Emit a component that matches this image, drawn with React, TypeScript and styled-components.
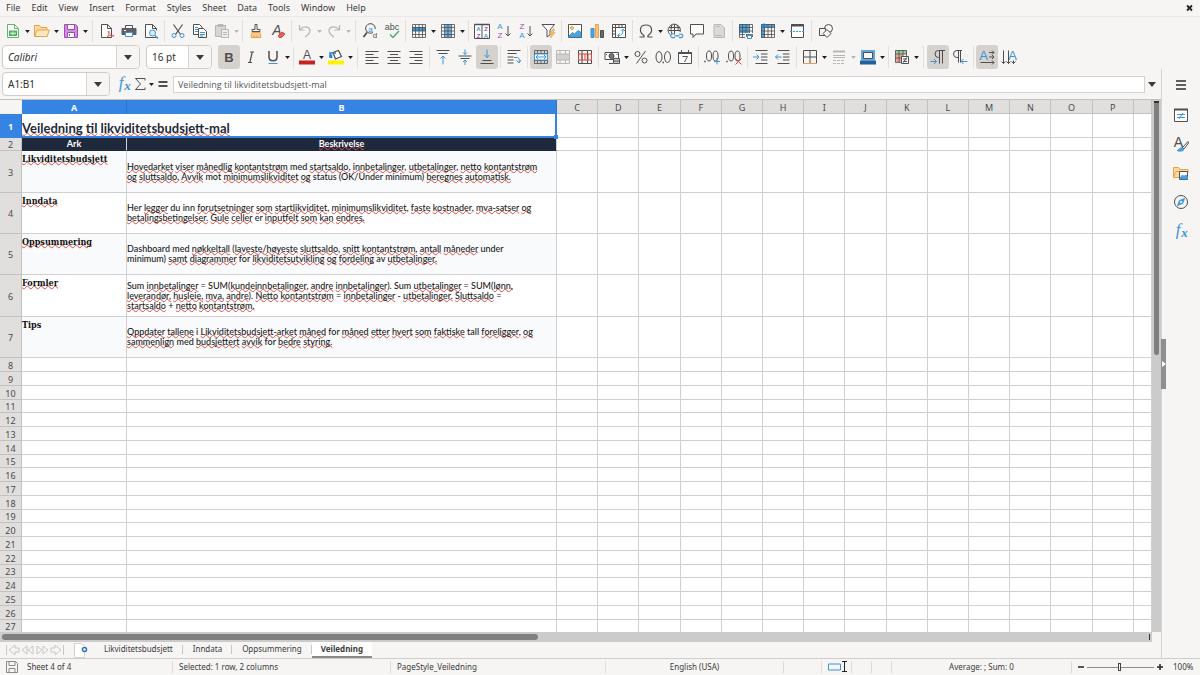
import React, { Fragment, ReactNode } from "react";
import styled, { createGlobalStyle, css } from "styled-components";

const INK = "#4f4f4f";
const BLUE = "#3d94d6";
const RED = "#d9453f";
const ORANGE = "#e8a24a";
const PURPLE = "#a04bb5";
const GREY = "#b9b7b5";

const GlobalStyle = createGlobalStyle`
  *, *::before, *::after { box-sizing: border-box; }
  body { margin: 0; background: #f6f5f4; font: 9px/12px "Noto Sans", sans-serif; color: #3b3b3b; }
  button, input { font: inherit; color: inherit; margin: 0; padding: 0; border: 0; background: none; }
`;

/* ---------- page frame ---------- */

const Page = styled.div`
  display: flex;
  flex-direction: column;
  height: 100vh;
  overflow: hidden;
`;

const MenuBar = styled.nav`
  display: flex;
  flex: none;
  align-items: center;
  gap: 11px;
  height: 17px;
  padding: 0 6px;
  border-bottom: 1px solid #eae8e6;
`;

const MenuItem = styled.button`
  height: 16px;
  line-height: 16px;
`;

const CloseButton = styled.button`
  display: flex;
  margin-left: auto;
`;

const Toolbar = styled.div<{ $height: number }>`
  display: flex;
  flex: none;
  align-items: center;
  height: ${(p) => p.$height}px;
  padding: 0 2px;
`;

const ToolButton = styled.button<{ $active?: boolean }>`
  display: flex;
  flex: none;
  align-items: center;
  justify-content: center;
  width: 22px;
  height: 24px;
  border-radius: 3px;
  ${(p) => p.$active && css`background: #d5d1cd;`}
`;

const ArrowButton = styled.button<{ $dim?: boolean }>`
  display: flex;
  flex: none;
  align-items: center;
  justify-content: center;
  width: 7px;
  height: 24px;
  color: ${(p) => (p.$dim ? GREY : "#1c1c1c")};
`;

const Separator = styled.span<{ $wide?: boolean }>`
  flex: none;
  width: 1px;
  height: 22px;
  margin: 0 ${(p) => (p.$wide ? 3 : 2)}px;
  background: #e2e0de;
`;

const Combo = styled.div<{ $width: number }>`
  display: flex;
  flex: none;
  width: ${(p) => p.$width}px;
  height: 24px;
  margin-right: 6px;
  border: 1px solid #cfccc9;
  border-radius: 4px;
  background: #fff;
  overflow: hidden;
`;

const ComboInput = styled.input<{ $italic?: boolean }>`
  flex: 1;
  min-width: 0;
  padding-left: 5px;
  font-size: 10px;
  font-style: ${(p) => (p.$italic ? "italic" : "normal")};
  color: #2e2e2e;
`;

const ComboArrow = styled.button`
  display: flex;
  align-items: center;
  justify-content: center;
  width: 23px;
  border-left: 1px solid #d9d6d3;
  background: #f6f5f4;
`;

const Main = styled.div`
  display: flex;
  flex: 1;
  min-height: 0;
`;

const Workspace = styled.main`
  display: flex;
  flex: 1;
  flex-direction: column;
  min-width: 0;
`;

const FormulaBar = styled.div`
  display: flex;
  flex: none;
  align-items: center;
  height: 31px;
  padding: 0 2px;
  border-bottom: 1px solid #c4c2c0;
`;

const FormulaButton = styled.button`
  display: flex;
  align-items: center;
  justify-content: center;
  width: 16px;
  height: 22px;
`;

const FormulaInput = styled.input`
  flex: 1;
  height: 17px;
  margin-left: 2px;
  padding-left: 4px;
  border: 1px solid #d5d2cf;
  background: #fff;
  color: #555;
  font-family: "Open Sans", "Noto Sans", sans-serif;
`;

const ExpandButton = styled.button`
  display: flex;
  align-items: center;
  justify-content: center;
  width: 14px;
  height: 22px;
`;

const Sidebar = styled.aside`
  position: relative;
  display: flex;
  flex: none;
  flex-direction: column;
  align-items: center;
  gap: 7px;
  width: 39px;
  padding-top: 5px;
  border-left: 1px solid #d5d2cf;
`;

const SidebarButton = styled.button`
  display: flex;
  align-items: center;
  justify-content: center;
  width: 24px;
  height: 22px;

  &:first-child { margin-bottom: 1px; }
`;

const SidebarHandle = styled.button`
  position: absolute;
  top: 270px;
  left: -1px;
  display: flex;
  align-items: center;
  justify-content: center;
  width: 5px;
  height: 50px;
  background: #8f8f8f;
`;

/* ---------- sheet ---------- */

const SheetArea = styled.div`
  display: flex;
  flex: 1;
  min-height: 0;
`;

const SheetView = styled.div`
  flex: 1;
  min-width: 0;
  overflow: hidden;
  background: #fff;
`;

const Sheet = styled.table`
  width: 100%;
  table-layout: fixed;
  border-collapse: separate;
  border-spacing: 0;
`;

const Column = styled.col<{ $width?: number }>`
  ${(p) => p.$width && css`width: ${p.$width}px;`}
`;

const Row = styled.tr<{ $height: number }>`
  height: ${(p) => p.$height}px;
`;

const HeadCell = styled.th<{ $selected?: boolean }>`
  padding: 1px 0 0;
  overflow: hidden;
  border-right: 1px solid ${(p) => (p.$selected ? "#2c72c7" : "#c4c2c0")};
  border-bottom: 1px solid ${(p) => (p.$selected ? "#3584e4" : "#c4c2c0")};
  background: ${(p) => (p.$selected ? "#3584e4" : "#e1dfde")};
  color: ${(p) => (p.$selected ? "#fff" : "#4a4a4a")};
  font-weight: ${(p) => (p.$selected ? 700 : 400)};
  line-height: 11px;
`;

const CornerCell = styled(HeadCell)`
  border-color: #f0efee;
  background: #f6f5f4;
`;

const Cell = styled.td`
  padding: 0;
  border-right: 1px solid #d0d0d0;
  border-bottom: 1px solid #d0d0d0;
`;

const TitleCell = styled(Cell)`
  position: relative;
  border-right: 2px solid #3584e4;
  border-bottom: 2px solid #3584e4;
  color: #1e293b;
  font: 700 13px/15px Lato, sans-serif;
  vertical-align: bottom;
`;

const FillHandle = styled.span`
  position: absolute;
  right: -3px;
  bottom: -3px;
  width: 4px;
  height: 4px;
  background: #3584e4;
`;

const BannerCell = styled(Cell)`
  border-bottom-color: #1e293b;
  background: #1e293b;
  color: #fff;
  font: 700 9px/11px Lato, sans-serif;
  text-align: center;
  vertical-align: top;
`;

const TopicCell = styled(Cell)<{ $tint: boolean }>`
  padding-top: 2px;
  background: ${(p) => (p.$tint ? "#f8fafc" : "#fff")};
  color: #111;
  font: 700 9px/12px "DejaVu Serif Condensed", "DejaVu Serif", serif;
  font-stretch: condensed;
  vertical-align: top;
`;

const TextCell = styled(Cell)<{ $tint: boolean }>`
  background: ${(p) => (p.$tint ? "#f8fafc" : "#fff")};
  color: #1a1a1a;
  font: 500 9px/10px Lato, sans-serif;
  white-space: nowrap;
`;

const Misspelt = styled.span`
  text-decoration: underline wavy #dc4a44 1px;
  text-decoration-skip-ink: none;
  text-underline-offset: -1px;
`;

const VerticalScroll = styled.div`
  flex: none;
  width: 9px;
  padding: 1px 2px;
  background: #cbcbcb;
`;

const VerticalThumb = styled.div`
  height: 254px;
  border-top: 2px solid #333;
  border-radius: 0 0 3px 3px;
  background: #7f7f7f;
`;

const HorizontalScroll = styled.div`
  display: flex;
  flex: none;
  justify-content: space-between;
  height: 10px;
  margin-right: 9px;
  padding: 2px;
  background: #cbcbcb;
`;

const HorizontalThumb = styled.div`
  width: calc(100% * 7 / 15);
  border-radius: 3px;
  background: #7f7f7f;
`;

const ScrollEnd = styled.span`
  width: 1px;
  background: #333;
`;

const TabBar = styled.div`
  display: flex;
  flex: none;
  align-items: stretch;
  height: 16px;
  padding-left: 5px;
  font-size: 8px;
`;

const TabNav = styled.button`
  display: flex;
  align-items: center;
  width: 15px;
`;

const AddTab = styled.button`
  display: flex;
  align-items: center;
  margin: 0 5px 0 9px;
`;

const Tab = styled.button<{ $active?: boolean }>`
  position: relative;
  padding: 0 10px 2px;
  ${(p) =>
    p.$active
      ? css`
          padding: 0 9px;
          border-bottom: 2px solid #8a8a8a;
          background: #fff;
          font-weight: 700;
        `
      : css`
          &::after {
            content: "";
            position: absolute;
            right: 0;
            top: 3px;
            height: 9px;
            border-right: 1px solid #c9c7c5;
          }
        `}
`;

const StatusBar = styled.footer`
  display: flex;
  flex: none;
  align-items: center;
  height: 17px;
  border-top: 1px solid #d0cecc;
  font-size: 8px;
`;

const StatusItem = styled.div<{ $width: number; $center?: boolean; $plain?: boolean }>`
  position: relative;
  display: flex;
  flex: ${(p) => p.$width} 1 ${(p) => p.$width}px;
  align-items: center;
  justify-content: ${(p) => (p.$center ? "center" : "flex-start")};
  height: 12px;
  padding-left: ${(p) => (p.$center ? 0 : 6)}px;
  border-right: 1px solid ${(p) => (p.$plain ? "transparent" : "#dedcda")};
  white-space: nowrap;
`;

const PointerMark = styled.span`
  position: absolute;
  top: -1px;
  left: 19px;
  display: flex;
`;

const ZoomGroup = styled.div`
  display: flex;
  flex: none;
  align-items: center;
  gap: 2px;
  width: 92px;
  padding-left: 5px;
`;

const ZoomButton = styled.button`
  display: flex;
`;

const ZoomSlider = styled.input`
  appearance: none;
  flex: 1;
  min-width: 0;
  height: 10px;

  &::-webkit-slider-runnable-track {
    height: 8px;
    background: linear-gradient(#8e8e8e, #8e8e8e) center / 100% 1px no-repeat;
  }
  &::-webkit-slider-thumb {
    appearance: none;
    width: 3px;
    height: 8px;
    border: 1px solid #444;
    background: #f6f5f4;
  }
`;

const ZoomLabel = styled.div`
  flex: none;
  width: 36px;
  padding-left: 9px;
`;

/* ---------- icons ---------- */

const Drawing = styled.svg`
  flex: none;
  overflow: visible;
`;

const Svg = ({ w = 16, h = 16, children }: { w?: number; h?: number; children: ReactNode }) => (
  <Drawing width={w} height={h} viewBox={`0 0 ${w} ${h}`} fill="none" stroke={INK} aria-hidden="true">
    {children}
  </Drawing>
);

const Letter = ({ x, y, size = 8, fill = INK, weight = 400, italic, serif, children }: {
  x: number; y: number; size?: number; fill?: string; weight?: number; italic?: boolean; serif?: boolean; children: string;
}) => (
  <text x={x} y={y} fontSize={size} fill={fill} stroke="none" fontWeight={weight} textAnchor="middle"
    fontStyle={italic ? "italic" : "normal"}
    fontFamily={serif ? "'Liberation Serif', serif" : "'Liberation Sans', sans-serif"}>
    {children}
  </text>
);

const Caret = ({ size = 5 }: { size?: number }) => (
  <svg width={size} height={size === 5 ? 3 : 5} viewBox="0 0 8 5" fill="currentColor" aria-hidden="true">
    <path d="M0 0h8L4 5z" />
  </svg>
);

const Grid = ({ stroke = INK }: { stroke?: string }) => (
  <path d="M1.5 1.5h13v13h-13zM1.5 4.5h13M1.5 8h13M1.5 11.5h13M4.5 1.5v13M8 1.5v13M11.5 1.5v13" stroke={stroke} strokeWidth=".8" />
);

const icons: Record<string, ReactNode> = {
  new: (
    <>
      <path d="M2.5 1.5h7l4 4v9h-11z" fill="#fff" stroke="#5fb86a" />
      <path d="M9.5 1.5v4h4" stroke="#5fb86a" />
      <path d="M4.500 8h7v4.500h-7z" stroke="#3fa350" fill="#6cc279" />
      <path d="M5 10.300h6M8 8.500v4" stroke="#e6f6e8" strokeWidth=".8" />
    </>
  ),
  open: (
    <>
      <path d="M.5 13.5v-11h5l1.5 2h6v3" fill="#fbd9a0" stroke={ORANGE} />
      <path d="M.7 13.5l2.5-6.5h12l-2 6.500z" fill="#fde7c2" stroke={ORANGE} />
    </>
  ),
  save: (
    <>
      <path d="M1.500 1.500h11l2 2v11h-13z" fill="#cf8fdd" stroke={PURPLE} />
      <path d="M4.500 1.500h7v5h-7z" fill="#fff" stroke={PURPLE} />
      <path d="M4.500 9.500h7v5h-7z" fill="#fff" stroke={PURPLE} />
      <path d="M6.500 11v2" stroke={PURPLE} />
    </>
  ),
  pdf: (
    <>
      <path d="M2.500 1.500h6l4 4v9h-10z" fill="#fff" />
      <path d="M8.500 1.500v4h4" />
      <path d="M7.500 14.500c2-2 3-4 2.500-6-.5-1.500-1.500 0 0 2s2.500 2.500 4.500 2.700c1.500.2 0-1.500-2.500-.7-2 .4-3.500 1-4.500 2z" stroke={RED} strokeWidth=".8" />
    </>
  ),
  print: (
    <>
      <path d="M4.500 5V2.500h7V5" fill="#fff" />
      <path d="M1 5.500h14v6H1z" fill="#5a6065" stroke="#5a6065" />
      <path d="M4.500 9.500h7v4h-7z" fill="#fff" stroke={BLUE} />
      <path d="M3 7.500h2" stroke="#fff" />
    </>
  ),
  preview: (
    <>
      <path d="M13.500 14.500h-11v-13h7l4 4" fill="#fff" />
      <path d="M9.500 1.500v4h4v2" />
      <circle cx="9.500" cy="10" r="3" stroke={BLUE} fill="#dcecf9" />
      <path d="M12 12.500l3 3" stroke={BLUE} strokeWidth="1.500" />
    </>
  ),
  cut: (
    <>
      <path d="M3.500 1.500l7 10M12.500 1.500l-7 10" strokeWidth="1.200" />
      <circle cx="4" cy="12.500" r="2" stroke={BLUE} />
      <circle cx="12" cy="12.500" r="2" stroke={BLUE} />
    </>
  ),
  copy: (
    <>
      <path d="M1.500 1.500h6l2.500 2.500v7.500h-8.500z" fill="#fff" />
      <path d="M3 4.500h3M3 6.500h3M3 8.500h3" stroke={BLUE} />
      <path d="M6.500 5.500h5l3 3v6h-8z" fill="#fff" />
      <path d="M8 9.500h5M8 11.500h5M8 13h3" stroke={BLUE} />
    </>
  ),
  paste: (
    <>
      <path d="M1.500 2.500h10v11h-10z" fill="#d8d6d4" stroke={GREY} />
      <path d="M4 1.500h5v2H4z" fill={GREY} stroke={GREY} />
      <path d="M7.500 6.500h7v8h-7zM9 9.500h4M9 11.500h4" fill="#efeeed" stroke={GREY} />
    </>
  ),
  clone: (
    <>
      <path d="M7 1.500h2v5h3v2H4v-2h3z" fill="#fff" />
      <path d="M4 9.500h8l1 5H3z" fill="#f8cf93" stroke={ORANGE} />
      <path d="M6 14v-2M9 14v-2" stroke={ORANGE} />
    </>
  ),
  clear: (
    <>
      <Letter x={7} y={12} size={14} italic>A</Letter>
      <path d="M8.500 12.500l3.500-3.500 3 2-3.500 3.500H9z" fill="#e8605a" stroke={RED} />
    </>
  ),
  undo: <path d="M2.500 2v5h5M3 6.500C6 3 12 3 13 7c.5 3-2 5-5 7" stroke={GREY} strokeWidth="1.200" />,
  redo: <path d="M13.500 2v5h-5M13 6.500C10 3 4 3 3 7c-.5 3 2 5 5 7" stroke={GREY} strokeWidth="1.200" />,
  find: (
    <>
      <path d="M11 9.500A4.800 4.800 0 1 1 13.200 6" />
      <path d="M5 9.500L1.500 14" strokeWidth="1.800" />
      <Letter x={8.500} y={8.500} size={8} fill={BLUE}>a</Letter>
      <Letter x={13} y={15} size={8}>d</Letter>
    </>
  ),
  spell: (
    <>
      <Letter x={8} y={7} size={9}>abc</Letter>
      <path d="M6 11.500l3 3 6-6.500" stroke="#4bb06a" strokeWidth="1.500" />
    </>
  ),
  row: (
    <>
      <path d="M1 4h14v4H1z" fill="#3d94d6" stroke="none" />
      <Grid />
    </>
  ),
  column: (
    <>
      <path d="M5 1h6v14H5z" fill="#6cb2e8" stroke="none" />
      <Grid />
    </>
  ),
  sort: (
    <>
      <path d="M.5 1.500h15v14H.5zM8 1.500v14" fill="#fff" />
      <path d="M.5 1.500h15" strokeWidth="1.500" />
      <Letter x={4.500} y={8} size={6} fill={BLUE} weight={700}>A</Letter>
      <Letter x={4.500} y={15} size={6} fill={PURPLE} weight={700}>Z</Letter>
      <Letter x={12} y={8} size={6} fill={PURPLE} weight={700}>Z</Letter>
      <Letter x={12} y={15} size={6} fill={BLUE} weight={700}>A</Letter>
    </>
  ),
  ascending: (
    <>
      <Letter x={4} y={6} size={8} fill={BLUE}>A</Letter>
      <Letter x={4} y={15} size={8} fill={PURPLE}>Z</Letter>
      <path d="M12 3v10M9.500 10.500L12 13l2.500-2.500" />
    </>
  ),
  descending: (
    <>
      <Letter x={4} y={6} size={8} fill={PURPLE}>Z</Letter>
      <Letter x={4} y={15} size={8} fill={BLUE}>A</Letter>
      <path d="M12 3v10M9.500 10.500L12 13l2.500-2.500" />
    </>
  ),
  filter: (
    <>
      <path d="M2 1.500h12.500L10 7v5l-3 2V7z" fill="#fff" />
      <path d="M13 6l-3 4.500h2L10.500 15 15 9.500h-2L14.500 6z" fill="#f9c56f" stroke={ORANGE} strokeWidth=".8" />
    </>
  ),
  image: (
    <>
      <path d="M1.500 1.500h13v13h-13z" fill="#fff" />
      <path d="M2 13l3.500-3.500 2 1.500L11 7.500l3 2V14H2z" fill="#4fa2e0" stroke={BLUE} />
      <circle cx="5" cy="5" r="1.500" fill="#f9c56f" stroke={ORANGE} />
    </>
  ),
  chart: (
    <>
      <path d="M2 5.500h3v9H2z" fill="#4fa2e0" stroke={BLUE} />
      <path d="M6.500 1.500h3v13h-3z" fill="#f6c47c" stroke={ORANGE} />
      <path d="M11.500 7.500h3v7h-3z" fill="#6a6a6a" />
    </>
  ),
  pivot: (
    <>
      <path d="M1.500 1.500h13v13h-13zM1.500 4.500h13M4.500 1.500v13M8 1.500v3M11 1.500v3M1.500 8h3M1.500 11h3" fill="#fff" />
      <path d="M7 12.500c4 0 5-2 5-6M10.500 8L12 6l2 2M8.500 10.500l-2 2 2 2" stroke={BLUE} />
    </>
  ),
  omega: <path d="M1.500 14H6v-1.500C.5 9 1.500 2 8 2s7.500 7 2 10.500V14h4.500" strokeWidth="1.200" />,
  link: (
    <>
      <path d="M3 11.500A6 6 0 1 1 13 9M2 4.500h11M1.500 7.500h12M7.500 1v10M5 2C3.500 5 4 8 5 11M10 2c1.200 2 1.500 4 1.200 6" />
      <path d="M8 11H5.500a1.800 1.800 0 0 0 0 3.600H8M12 11h2a1.800 1.800 0 0 1 0 3.600h-2M7.500 12.800h5" stroke={BLUE} strokeWidth="1.200" />
    </>
  ),
  comment: <path d="M1.500 1.500h13v9.500H7l-3 3.500V11H1.500z" fill="#fff" />,
  header: (
    <>
      <path d="M3 1.500h7l3.500 3.500v9.500H3z" fill="#dcdad8" stroke={GREY} />
      <path d="M5 3.500h4M5 12.500h6" stroke={GREY} />
    </>
  ),
  printArea: (
    <>
      <path d="M1 1h10v9H1z" fill="#4fa2e0" stroke="none" />
      <Grid />
      <path d="M7.500 10.500h8v4h-8z" fill="#6a7075" stroke="#fff" />
      <path d="M9.500 12.500h4v3h-4z" fill="#fff" stroke={BLUE} />
    </>
  ),
  freeze: (
    <>
      <path d="M1 1h14v3.500H5V15H1z" fill="#4fa2e0" stroke="none" />
      <Grid />
      <path d="M4 0v6M1 3h6M2 1l4 4M6 1L2 5" stroke="#2a80c8" strokeWidth=".8" />
    </>
  ),
  split: (
    <>
      <path d="M2.500 1.500h12v13h-12z" fill="#fff" />
      <path d="M2 2.500h13" strokeWidth="2" />
      <path d="M1 8.500h15" stroke={BLUE} strokeDasharray="2 1" />
    </>
  ),
  shapes: (
    <>
      <circle cx="10.500" cy="5.500" r="4" />
      <path d="M1.500 5.500h6v7h-6z" fill="#f6f5f4" />
      <path d="M9 6.500l4 4-4 4-4-4z" fill="#f6f5f4" />
    </>
  ),
  bold: <Letter x={8} y={13} size={13} weight={700}>B</Letter>,
  italic: <path d="M7 3h4M5 13.500h4M9.300 3L6.800 13.500" strokeWidth="1.200" />,
  underline: (
    <>
      <path d="M4 2v6c0 5 8 5 8 0V2" strokeWidth="1.500" />
      <path d="M3.500 14.500h9" stroke={BLUE} />
    </>
  ),
  fontColor: (
    <>
      <Letter x={8} y={10} size={12}>A</Letter>
      <path d="M0 13.500h16" stroke="#c9211e" strokeWidth="4" />
    </>
  ),
  highlight: (
    <>
      <path d="M5 3.500l5.500-2 3 6-6 2.500z" fill="#fff" strokeWidth="1.200" />
      <path d="M2 9V4h6M3.500 9V5.500" stroke="#2a80c8" strokeWidth="1.500" />
      <path d="M0 13.500h16" stroke="#fff200" strokeWidth="4" />
    </>
  ),
  left: <path d="M1.500 2.500h13M1.500 5.500h8M1.500 8.500h13M1.500 11.500h8M1.500 14.500h13" />,
  center: <path d="M1.500 2.500h13M4 5.500h8M1.500 8.500h13M4 11.500h8M1.500 14.500h13" />,
  right: <path d="M1.500 2.500h13M6.500 5.500h8M1.500 8.500h13M6.500 11.500h8M1.500 14.500h13" />,
  top: (
    <>
      <path d="M1.500 1.500h13M3.500 4.500h9" />
      <path d="M8 15.500v-8M5.500 9.500L8 7l2.500 2.500" stroke={BLUE} />
    </>
  ),
  middle: (
    <>
      <path d="M1.500 7h13M3.500 9.500h9" />
      <path d="M8 .5v5M6 3.500l2 2 2-2M8 16v-5M6 13l2-2 2 2" stroke={BLUE} />
    </>
  ),
  bottom: (
    <>
      <path d="M3.500 11.500h9M1.500 14.500h13" />
      <path d="M8 .5v8M5.500 6L8 8.500 10.500 6" stroke={BLUE} />
    </>
  ),
  wrap: (
    <>
      <path d="M1.500 1.500h13M1.500 4.500h9M1.500 8h6M1.500 11h6M1.500 14h6" />
      <path d="M8 8.500h3.500c2 0 2 4 1.500 5M10.500 11.500l2.500 2.500 2-3" stroke={BLUE} />
    </>
  ),
  merge: (
    <>
      <Grid />
      <path d="M1.500 5h13v6h-13z" fill="#fff" stroke={BLUE} />
      <path d="M3 8h10M5 6L3 8l2 2M11 6l2 2-2 2" stroke={BLUE} />
    </>
  ),
  mergeDim: (
    <>
      <path d="M1.500 5h13v6h-13z" fill="#d3d1cf" stroke="none" />
      <path d="M1.500 1.500h13v13h-13zM1.500 5h13M1.500 11h13M5 1.500V5M10.500 1.500V5M5 11v3.500M10.500 11v3.500" stroke={GREY} />
    </>
  ),
  unmerge: (
    <>
      <path d="M1.500 1.500h13v13h-13zM5 1.500v13M10.500 1.500v13" />
      <path d="M1.500 5h13v6h-13zM5 5v6M8 5v6M11 5v6" stroke={RED} />
    </>
  ),
  currency: (
    <>
      <path d="M1 3.500h13.500v7H1z" fill="#fff" />
      <circle cx="7.500" cy="7" r="2.500" fill="#777" />
      <path d="M2 5.500h1M12.500 5.500h1" />
      <path d="M9.500 9.500h6v5h-6zM9.500 12h6M5 14.500h4" fill="#ccc" />
    </>
  ),
  percent: (
    <>
      <circle cx="4.500" cy="5" r="2.500" />
      <circle cx="11.500" cy="11.500" r="2.500" />
      <path d="M12.500 2l-9 12.500" />
    </>
  ),
  number: (
    <>
      <ellipse cx="4" cy="8" rx="3" ry="5.500" />
      <ellipse cx="12.500" cy="8" rx="3" ry="5.500" />
      <path d="M7.500 13.500h1.500" strokeWidth="1.500" />
    </>
  ),
  date: (
    <>
      <path d="M1.500 3.500h13v11h-13z" fill="#fff" />
      <path d="M1.500 4h13" strokeWidth="2" />
      <path d="M4.500 1v3M11.500 1v3M5.500 7.500h5L7.500 13" />
    </>
  ),
  addDecimal: (
    <>
      <path d="M.2 12.500h1.500" strokeWidth="1.500" />
      <ellipse cx="5" cy="7" rx="2.500" ry="5" />
      <ellipse cx="11.500" cy="7" rx="2.500" ry="5" />
      <path d="M13 9v6.500M10 12.500h6" stroke={BLUE} />
    </>
  ),
  removeDecimal: (
    <>
      <path d="M.2 12.500h1.500" strokeWidth="1.500" />
      <ellipse cx="5" cy="7" rx="2.500" ry="5" />
      <ellipse cx="11.500" cy="7" rx="2.500" ry="5" />
      <path d="M9.500 9.500l6 6M15.500 9.500l-6 6" stroke={RED} />
    </>
  ),
  indent: (
    <>
      <path d="M2.500 1.500h12M8 5h6.500M8 8h6.500M8 11h6.500M2.500 14.500h12" />
      <path d="M0 8h6M3.500 5.500L6 8l-2.500 2.500" stroke={BLUE} />
    </>
  ),
  outdent: (
    <>
      <path d="M2.500 1.500h12M8 5h6.500M8 8h6.500M8 11h6.500M2.500 14.500h12" />
      <path d="M.5 8h6M3 5.500L.5 8 3 10.500" stroke={BLUE} />
    </>
  ),
  borders: (
    <>
      <path d="M1.500 14V1.500h13V14M8 1.500V14M1.500 8h13" />
      <path d="M1 14.500h14" stroke={ORANGE} />
    </>
  ),
  borderStyle: (
    <>
      <path d="M2 2.500h12" stroke={GREY} strokeWidth="2" />
      <path d="M2 6.500h12M2 8.500h12" stroke={GREY} />
      <path d="M2 11.500h12M2 14.500h12" stroke={GREY} strokeDasharray="3 1" />
    </>
  ),
  borderColor: (
    <>
      <path d="M1.500 1.500h13v9.500h-13z" fill="#5ba6dd" stroke="#5ba6dd" />
      <path d="M3.500 3.500h9v6h-9z" fill="#f6f5f4" />
      <path d="M0 13.500h16" stroke="#1f5f9f" strokeWidth="4" />
    </>
  ),
  conditional: (
    <>
      <path d="M1 1h12v4H1z" fill="#8fd19a" stroke="none" />
      <path d="M1 5h8v8H1z" fill="#f2a09b" stroke="none" />
      <path d="M1.500 1.500h11v12h-11zM1.500 5h11M1.500 9h11M5 1.500v12M9 1.500v12" strokeWidth=".8" />
      <path d="M7.500 7.500h7v7h-7z" fill="#fff" />
      <path d="M9 10h4M9 12.500h4M12.500 8.500l-3 5" />
    </>
  ),
  ltr: (
    <>
      <path d="M15 1.500H8.500a3.500 3.500 0 0 0 0 7H9M9.500 1.500v13M12.500 1.500v13" />
      <path d="M.5 12.500h6M4 10l2.500 2.500L4 15" stroke={BLUE} />
    </>
  ),
  rtl: (
    <>
      <path d="M10 1.500H5a3.500 3.500 0 0 0 0 7h1M6.500 1.500v12M8.500 1.500v12" />
      <path d="M9 12.500h6.500M11.500 10L9 12.500l2.500 2.500" stroke={BLUE} />
    </>
  ),
  textLtr: (
    <>
      <Letter x={4.500} y={10.500} size={13} fill={BLUE}>A</Letter>
      <path d="M10 3.500h5M10 8h5M1.500 13.500h13.500M13 1.500l2 2-2 2M13 6l2 2-2 2M13 11.500l2 2-2 2" />
    </>
  ),
  textTtb: (
    <>
      <Letter x={11.500} y={10.500} size={13} fill={BLUE}>A</Letter>
      <path d="M2.500 1.500v13M7.500 1.500v13M12.500 11.500v3M.5 12.500l2 2 2-2M5.500 12.500l2 2 2-2M10.500 12.500l2 2 2-2" />
    </>
  ),
  fx: (
    <>
      <Letter x={5} y={12} size={17} fill={BLUE} italic serif>f</Letter>
      <Letter x={11.500} y={14} size={13} fill={BLUE} italic serif weight={700}>x</Letter>
    </>
  ),
  sigma: <path d="M12 4.500V2.500H2.500l5 5.500-5 5.500H12v-2" />,
  equals: <path d="M3.500 6h9M3.500 10h9" strokeWidth="1.800" />,
  menu: <path d="M3 4h10M3 8h10M3 12h10" stroke="#2e2e2e" strokeWidth="1.500" />,
  properties: (
    <>
      <path d="M1.500 2.500h13v12h-13z" fill="#fff" />
      <path d="M1 2.500h14" strokeWidth="2" />
      <path d="M4 7.500h8M4 10.500h8M10 6L6 12" stroke={BLUE} />
    </>
  ),
  styles: (
    <>
      <Letter x={5.500} y={11} size={14}>A</Letter>
      <path d="M15 5.500l-5 5.500-1 1 2 1 4.500-6z" fill="#fff" />
      <path d="M4 14.500c2 0 2-3 5-2.500l2 1.500c-1 2-5 2-7 1z" fill="#4fa2e0" stroke={BLUE} />
    </>
  ),
  gallery: (
    <>
      <path d="M.5 12.500v-10h5l1.500 2h8v3" fill="#fbd9a0" stroke={ORANGE} />
      <path d="M.5 12.500l2.500-6h4v6z" fill="#fbd9a0" stroke={ORANGE} />
      <path d="M6.500 6.500h8v8h-8z" fill="#fff" />
      <path d="M7 13l2.500-3 1.500 1.500 1.500-1.500 2 1.500V14H7z" fill="#4fa2e0" stroke={BLUE} />
    </>
  ),
  navigator: (
    <>
      <circle cx="8" cy="8" r="6.500" />
      <path d="M11.500 4.500L9.500 9.500l-5 2 2-5z" fill="#4fa2e0" stroke={BLUE} />
      <circle cx="8" cy="8" r="1" fill="#fff" stroke="none" />
    </>
  ),
};

/* ---------- toolbar contents ---------- */

type Tool = { icon: string; label: string; active?: boolean; menu?: boolean; dim?: boolean };
type Entry = Tool | "|" | "||";

const t = (icon: string, label: string, extra: Partial<Tool> = {}): Tool => ({ icon, label, ...extra });

const standardTools: Entry[] = [
  t("new", "New", { menu: true }), t("open", "Open", { menu: true }), t("save", "Save", { menu: true }), "||",
  t("pdf", "Export as PDF"), t("print", "Print"), t("preview", "Print Preview"), "|",
  t("cut", "Cut"), t("copy", "Copy"), t("paste", "Paste", { menu: true, dim: true }), "|",
  t("clone", "Clone Formatting"), t("clear", "Clear Formatting"), "|",
  t("undo", "Undo", { menu: true, dim: true }), t("redo", "Redo", { menu: true, dim: true }), "||",
  t("find", "Find and Replace"), t("spell", "Spelling"), "|",
  t("row", "Row", { menu: true }), t("column", "Column", { menu: true }), "|",
  t("sort", "Sort"), t("ascending", "Sort Ascending"), t("descending", "Sort Descending"), t("filter", "AutoFilter"), "|",
  t("image", "Insert Image"), t("chart", "Insert Chart"), t("pivot", "Insert Pivot Table"), "|",
  t("omega", "Special Character", { menu: true }), t("link", "Hyperlink"), t("comment", "Comment"), t("header", "Headers and Footers"), "|",
  t("printArea", "Define Print Area"), t("freeze", "Freeze Rows and Columns", { menu: true }), t("split", "Split Window"), "||",
  t("shapes", "Show Draw Functions"),
];

const formatTools: Entry[] = [
  t("bold", "Bold", { active: true }), t("italic", "Italic"), t("underline", "Underline", { menu: true }), "|",
  t("fontColor", "Font Color", { menu: true }), t("highlight", "Background Color", { menu: true }), "||",
  t("left", "Align Left"), t("center", "Center Horizontally"), t("right", "Align Right"), "|",
  t("top", "Align Top"), t("middle", "Center Vertically"), t("bottom", "Align Bottom", { active: true }), "|",
  t("wrap", "Wrap Text"), "|",
  t("merge", "Merge and Center Cells", { active: true }), t("mergeDim", "Merge Cells"), t("unmerge", "Unmerge Cells"), "|",
  t("currency", "Format as Currency", { menu: true }), t("percent", "Format as Percent"), t("number", "Format as Number"), t("date", "Format as Date"), "|",
  t("addDecimal", "Add Decimal Place"), t("removeDecimal", "Delete Decimal Place"), "|",
  t("indent", "Increase Indent"), t("outdent", "Decrease Indent"), "|",
  t("borders", "Borders", { menu: true }), t("borderStyle", "Border Style", { menu: true, dim: true }), t("borderColor", "Border Color", { menu: true }), "|",
  t("conditional", "Conditional", { menu: true }), "||",
  t("ltr", "Left-To-Right", { active: true }), t("rtl", "Right-To-Left"), "|",
  t("textLtr", "Text direction from left to right", { active: true }), t("textTtb", "Text direction from top to bottom"),
];

const Tools = ({ entries }: { entries: Entry[] }) => (
  <>
    {entries.map((entry, i) =>
      typeof entry === "string" ? (
        <Separator key={i} $wide={entry === "||"} />
      ) : (
        <Fragment key={i}>
          <ToolButton $active={entry.active} aria-label={entry.label}>
            <Svg>{icons[entry.icon]}</Svg>
          </ToolButton>
          {entry.menu && (
            <ArrowButton $dim={entry.dim} aria-label={`${entry.label} options`}>
              <Caret />
            </ArrowButton>
          )}
        </Fragment>
      ),
    )}
  </>
);

/* ---------- sheet contents ---------- */

const menus = ["File", "Edit", "View", "Insert", "Format", "Styles", "Sheet", "Data", "Tools", "Window", "Help"];
const letters = ["C", "D", "E", "F", "G", "H", "I", "J", "K", "L", "M", "N", "O", "P", ""];

// Words between underscores are flagged by the spell checker.
const topics = [
  { height: 42, name: "_Likviditetsbudsjett_", lines: [
    "_Hovedarket_ _viser_ _månedlig_ _kontantstrøm_ med _startsaldo_, _innbetalinger_, _utbetalinger_, _netto_ _kontantstrøm_",
    "_og_ _sluttsaldo._ _Avvik_ mot _minimumslikviditet_ _og_ status (OK/Under minimum) _beregnes_ _automatisk._",
  ] },
  { height: 41, name: "_Inndata_", lines: [
    "Her _legger_ du inn _forutsetninger_ _som_ _startlikviditet_, _minimumslikviditet_, _faste_ _kostnader_, _mva-satser_ _og_",
    "_betalingsbetingelser._ _Gule_ _celler_ er _inputfelt_ _som_ _kan_ _endres._",
  ] },
  { height: 41, name: "_Oppsummering_", lines: [
    "Dashboard med _nøkkeltall_ (_laveste/høyeste_ _sluttsaldo_, _snitt_ _kontantstrøm_, _antall_ _måneder_ under",
    "minimum) _samt_ _diagrammer_ for _likviditetsutvikling_ _og_ _fordeling_ av _utbetalinger._",
  ] },
  { height: 42, name: "_Formler_", lines: [
    "Sum _innbetalinger_ = SUM(_kundeinnbetalinger_, _andre_ _innbetalinger_). Sum _utbetalinger_ = SUM(_lønn,_",
    "_leverandør,_ _husleie,_ _mva,_ _andre_). _Netto_ _kontantstrøm_ = _innbetalinger_ - _utbetalinger._ _Sluttsaldo_ =",
    "_startsaldo_ + _netto_ _kontantstrøm._",
  ] },
  { height: 41, name: "Tips", lines: [
    "_Oppdater_ _tallene_ i _Likviditetsbudsjett-arket_ _måned_ for _måned_ _etter_ _hvert_ _som_ _faktiske_ tall _foreligger_, _og_",
    "_sammenlign_ med _budsjettert_ _avvik_ for _bedre_ _styring._",
  ] },
];

const emptyRows = Array.from({ length: 20 }, (_, i) => ({ number: i + 8, height: i % 4 === 3 ? 13 : 14 }));

const Spelled = ({ text }: { text: string }) => (
  <>{text.split("_").map((part, i) => (i % 2 ? <Misspelt key={i}>{part}</Misspelt> : part))}</>
);

const BlankCells = () => (
  <>
    {letters.map((_, i) => <Cell key={i} />)}
  </>
);

const SpreadsheetGrid = () => (
  <Sheet>
    <colgroup>
      <Column $width={22} />
      <Column $width={105} />
      <Column $width={430} />
      {letters.map((letter, i) => <Column key={i} $width={letter ? undefined : 18} />)}
    </colgroup>
    <thead>
      <Row $height={14}>
        <CornerCell />
        <HeadCell $selected scope="col">A</HeadCell>
        <HeadCell $selected scope="col">B</HeadCell>
        {letters.map((letter, i) => <HeadCell key={i} scope="col">{letter}</HeadCell>)}
      </Row>
    </thead>
    <tbody>
      <Row $height={24}>
        <HeadCell $selected scope="row">1</HeadCell>
        <TitleCell colSpan={2}>
          <Spelled text="_Veiledning_ _til_ _likviditetsbudsjett-mal_" />
          <FillHandle />
        </TitleCell>
        <BlankCells />
      </Row>
      <Row $height={13}>
        <HeadCell scope="row">2</HeadCell>
        <BannerCell>Ark</BannerCell>
        <BannerCell><Spelled text="_Beskrivelse_" /></BannerCell>
        <BlankCells />
      </Row>
      {topics.map((topic, i) => (
        <Row key={topic.name} $height={topic.height}>
          <HeadCell scope="row">{i + 3}</HeadCell>
          <TopicCell $tint={i % 2 === 0}><Spelled text={topic.name} /></TopicCell>
          <TextCell $tint={i % 2 === 0}>
            {topic.lines.map((line) => <div key={line}><Spelled text={line} /></div>)}
          </TextCell>
          <BlankCells />
        </Row>
      ))}
      {emptyRows.map((row) => (
        <Row key={row.number} $height={row.height}>
          <HeadCell scope="row">{row.number}</HeadCell>
          <Cell />
          <Cell />
          <BlankCells />
        </Row>
      ))}
    </tbody>
  </Sheet>
);

const tabNav: [string, string][] = [
  ["First sheet", "M1.500 3v10M10 3L4 8l6 5V10h4V6h-4z"],
  ["Previous sheet", "M7 4L2 8l5 4zM13 4L8 8l5 4z"],
  ["Next sheet", "M2 4l5 4-5 4zM8 4l5 4-5 4z"],
  ["Last sheet", "M13.500 3v10M5 3l6 5-6 5V10H1V6h4z"],
];

const sidebarTools: [string, string][] = [
  ["menu", "Sidebar Settings"],
  ["properties", "Properties"],
  ["styles", "Styles"],
  ["gallery", "Gallery"],
  ["navigator", "Navigator"],
  ["fx", "Functions"],
];

export default function App() {
  return (
    <Page>
      <GlobalStyle />
      <MenuBar>
        {menus.map((name) => <MenuItem key={name}>{name}</MenuItem>)}
        <CloseButton aria-label="Close document">
          <Svg w={9} h={8}><path d="M2 1.500l5 5M7 1.500l-5 5" stroke="#222" strokeWidth="1.800" /></Svg>
        </CloseButton>
      </MenuBar>
      <Toolbar $height={28} role="toolbar" aria-label="Standard">
        <Tools entries={standardTools} />
      </Toolbar>
      <Toolbar $height={24} role="toolbar" aria-label="Formatting">
        <Combo $width={138}>
          <ComboInput $italic aria-label="Font Name" defaultValue="Calibri" />
          <ComboArrow aria-label="Show fonts"><Caret size={8} /></ComboArrow>
        </Combo>
        <Combo $width={66}>
          <ComboInput aria-label="Font Size" defaultValue="16 pt" />
          <ComboArrow aria-label="Show font sizes"><Caret size={8} /></ComboArrow>
        </Combo>
        <Tools entries={formatTools} />
      </Toolbar>
      <Main>
        <Workspace>
          <FormulaBar>
            <Combo $width={108}>
              <ComboInput aria-label="Name Box" defaultValue="A1:B1" />
              <ComboArrow aria-label="Show cell names"><Caret size={8} /></ComboArrow>
            </Combo>
            <FormulaButton aria-label="Function Wizard"><Svg>{icons.fx}</Svg></FormulaButton>
            <FormulaButton aria-label="Select Function"><Svg w={14}>{icons.sigma}</Svg></FormulaButton>
            <ArrowButton aria-label="Select Function options"><Caret /></ArrowButton>
            <FormulaButton aria-label="Formula"><Svg>{icons.equals}</Svg></FormulaButton>
            <FormulaInput aria-label="Input line" defaultValue="Veiledning til likviditetsbudsjett-mal" />
            <ExpandButton aria-label="Expand Formula Bar"><Caret size={8} /></ExpandButton>
          </FormulaBar>
          <SheetArea>
            <SheetView><SpreadsheetGrid /></SheetView>
            <VerticalScroll><VerticalThumb /></VerticalScroll>
          </SheetArea>
          <HorizontalScroll>
            <HorizontalThumb />
            <ScrollEnd />
          </HorizontalScroll>
          <TabBar role="tablist">
            {tabNav.map(([label, d]) => (
              <TabNav key={label} aria-label={label}>
                <Svg w={15}><path d={d} stroke="#c9c7c5" /></Svg>
              </TabNav>
            ))}
            <AddTab aria-label="Add sheet">
              <Svg w={15}>
                <path d="M.5 1.500h7l3 3v11H.5z" fill="#fff" stroke="#d5d2cf" />
                <circle cx="10.500" cy="7.500" r="2" stroke="#2c6fbe" strokeWidth="1.500" fill="#fff" />
              </Svg>
            </AddTab>
            <Tab role="tab">Likviditetsbudsjett</Tab>
            <Tab role="tab">Inndata</Tab>
            <Tab role="tab">Oppsummering</Tab>
            <Tab role="tab" $active aria-selected="true">Veiledning</Tab>
          </TabBar>
        </Workspace>
        <Sidebar>
          {sidebarTools.map(([icon, label]) => (
            <SidebarButton key={label} aria-label={label}><Svg>{icons[icon]}</Svg></SidebarButton>
          ))}
          <SidebarHandle aria-label="Hide sidebar">
            <Svg w={4} h={6}><path d="M0 0l4 3-4 3z" fill="#fff" stroke="none" /></Svg>
          </SidebarHandle>
        </Sidebar>
      </Main>
      <StatusBar>
        <StatusItem $width={21} $plain>
          <Svg w={12} h={12}><path d="M.5.500h9l2 2v9H.5zM3 .5v4h6v-4M3 11.500v-4h6v4" stroke="#8a8a8a" /></Svg>
        </StatusItem>
        <StatusItem $width={152}>Sheet 4 of 4</StatusItem>
        <StatusItem $width={218}>Selected: 1 row, 2 columns</StatusItem>
        <StatusItem $width={215}>PageStyle_Veiledning</StatusItem>
        <StatusItem $width={178} $center>English (USA)</StatusItem>
        <StatusItem $width={38} />
        <StatusItem $width={30}>
          <Svg w={13} h={8}><path d="M.5 1h12v6H.5z" stroke={BLUE} /></Svg>
          <PointerMark>
            <Svg w={7} h={13}><path d="M1 1.500h5M1 11.500h5M3.500 1.500v10" stroke="#222" /></Svg>
          </PointerMark>
        </StatusItem>
        <StatusItem $width={20} />
        <StatusItem $width={20} />
        <StatusItem $width={180} $center>Average: ; Sum: 0</StatusItem>
        <ZoomGroup>
          <ZoomButton aria-label="Zoom out"><Svg w={8} h={8}><path d="M1 4h6" stroke="#222" strokeWidth="1.500" /></Svg></ZoomButton>
          <ZoomSlider type="range" aria-label="Zoom" min={0} max={100} defaultValue={48} />
          <ZoomButton aria-label="Zoom in"><Svg w={8} h={8}><path d="M1 4h6M4 1v6" stroke="#222" strokeWidth="1.500" /></Svg></ZoomButton>
        </ZoomGroup>
        <ZoomLabel>100%</ZoomLabel>
      </StatusBar>
    </Page>
  );
}
